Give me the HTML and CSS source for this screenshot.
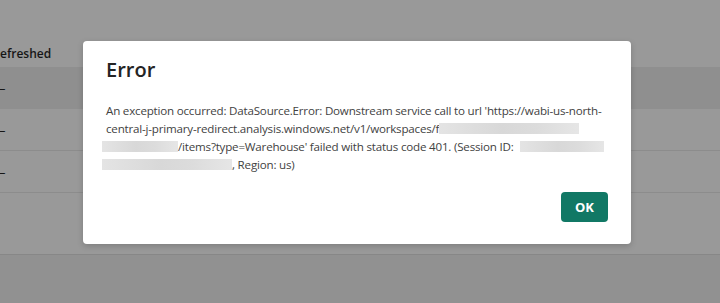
FILE: index.html
```html
<!DOCTYPE html>
<html lang="en">
<head>
<meta charset="utf-8">
<title>Error</title>
<link rel="stylesheet" href="styles.css">
</head>
<body>
<div class="page">
  <div class="table">
    <div class="table-head"><span class="col-title">efreshed</span></div>
    <div class="row row-selected"><span class="dash">–</span></div>
    <div class="row"><span class="dash">–</span></div>
    <div class="row"><span class="dash">–</span></div>
  </div>
  <div class="footer"></div>
</div>

<div class="dialog" role="dialog" aria-labelledby="dlg-title">
  <h2 class="dialog-title" id="dlg-title">Error</h2>
  <p class="dialog-body">An exception occurred: DataSource.Error: Downstream service call to url 'https://wabi-us-north-<br>central-j-primary-redirect.analysis.windows.net/v1/workspaces/f<span class="redact redact-a"></span><br><span class="redact redact-b"></span>/items?type=Warehouse' failed with status code 401. (Session ID: <span class="redact redact-c"></span><br><span class="redact redact-d"></span>, Region: us)</p>
  <div class="dialog-actions">
    <button class="btn-primary" type="button">OK</button>
  </div>
</div>
</body>
</html>
```

FILE: styles.css
```css
html, body {
  margin: 0;
  padding: 0;
}
body {
  width: 720px;
  height: 303px;
  overflow: hidden;
  background: #999999;
  font-family: "Open Sans", "Noto Sans", sans-serif;
}

.page {
  display: flex;
  flex-direction: column;
  height: 303px;
}
.table {
  padding-top: 40px;
  height: 255px;
  box-sizing: border-box;
  border-bottom: 1px solid #878787;
  flex-shrink: 0;
}
.table-head {
  height: 27px;
  display: flex;
  align-items: center;
}
.col-title {
  font-size: 12px;
  font-weight: 600;
  color: #161616;
}
.row {
  height: 41px;
  display: flex;
  align-items: center;
  border-bottom: 1px solid #8c8c8c;
}
.row-selected {
  background: #8f8f8f;
  border-bottom-color: #8f8f8f;
}
.dash {
  font-size: 13px;
  color: #161616;
  margin-left: -1px;
}
.footer {
  flex: 1;
  background: #919191;
}

.dialog {
  position: absolute;
  left: 83px;
  top: 41px;
  width: 548px;
  height: 203px;
  box-sizing: border-box;
  background: #ffffff;
  border-radius: 4px;
  box-shadow: 0 2px 6px rgba(0, 0, 0, 0.18);
  padding: 15px 23px 22px 23px;
  display: flex;
  flex-direction: column;
}
.dialog-title {
  margin: 0;
  font-size: 20px;
  line-height: 28px;
  font-weight: 600;
  color: #242424;
}
.dialog-body {
  margin: 18px 0 0 0;
  font-size: 11.6px;
  line-height: 18px;
  color: #424242;
  letter-spacing: -0.2px;
  white-space: nowrap;
}
.redact {
  display: inline-block;
  height: 11px;
  vertical-align: -1px;
  background: linear-gradient(90deg, #e4e4e4 0%, #d8d8d8 45%, #dcdcdc 70%, #e6e6e6 100%);
}
.redact-a { width: 140px; }
.redact-b { width: 76px; margin-left: -4px; }
.redact-c { width: 84px; margin-left: 4px; }
.redact-d { width: 130px; margin-left: -4px; }

.dialog-actions {
  margin-top: auto;
  display: flex;
  justify-content: flex-end;
}
.btn-primary {
  width: 47px;
  height: 30px;
  border: none;
  border-radius: 4px;
  background: #117865;
  color: #ffffff;
  font-family: "Open Sans", "Noto Sans", sans-serif;
  font-size: 13px;
  font-weight: 700;
  padding: 0;
}
```
